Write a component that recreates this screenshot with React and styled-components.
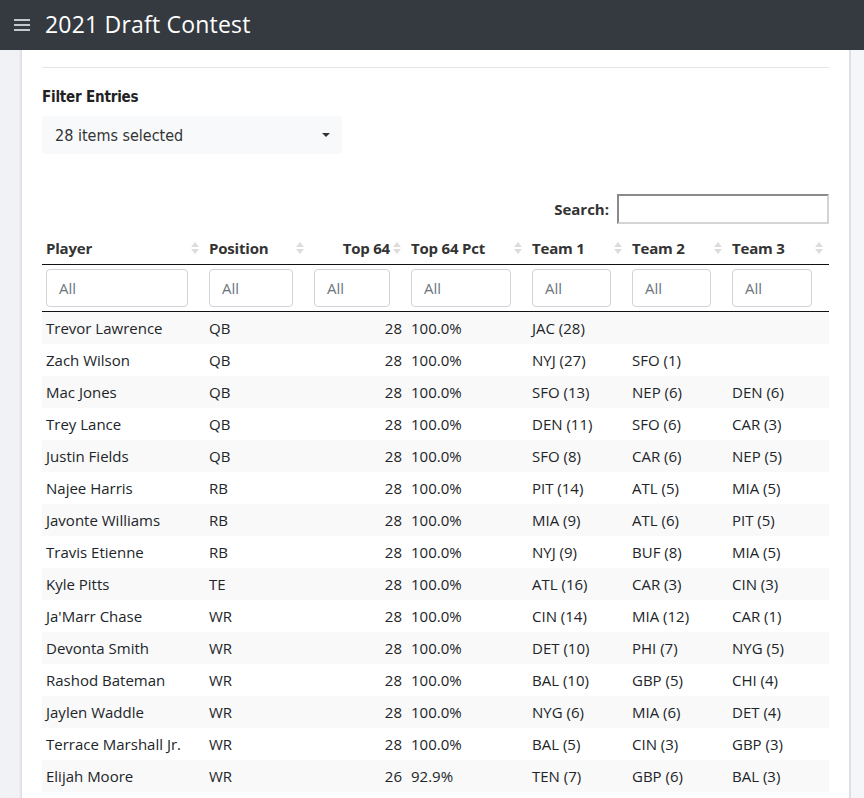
import * as React from 'react';
import styled, { createGlobalStyle } from 'styled-components';

const GlobalStyle = createGlobalStyle`
  html, body {
    margin: 0;
    padding: 0;
    background: #f4f6f9;
    font-family: 'Open Sans', 'Noto Sans', sans-serif;
    color: #212529;
  }
`;

const players = [
  ['Trevor Lawrence', 'QB', 28, '100.0%', 'JAC (28)', '', ''],
  ['Zach Wilson', 'QB', 28, '100.0%', 'NYJ (27)', 'SFO (1)', ''],
  ['Mac Jones', 'QB', 28, '100.0%', 'SFO (13)', 'NEP (6)', 'DEN (6)'],
  ['Trey Lance', 'QB', 28, '100.0%', 'DEN (11)', 'SFO (6)', 'CAR (3)'],
  ['Justin Fields', 'QB', 28, '100.0%', 'SFO (8)', 'CAR (6)', 'NEP (5)'],
  ['Najee Harris', 'RB', 28, '100.0%', 'PIT (14)', 'ATL (5)', 'MIA (5)'],
  ['Javonte Williams', 'RB', 28, '100.0%', 'MIA (9)', 'ATL (6)', 'PIT (5)'],
  ['Travis Etienne', 'RB', 28, '100.0%', 'NYJ (9)', 'BUF (8)', 'MIA (5)'],
  ['Kyle Pitts', 'TE', 28, '100.0%', 'ATL (16)', 'CAR (3)', 'CIN (3)'],
  ["Ja'Marr Chase", 'WR', 28, '100.0%', 'CIN (14)', 'MIA (12)', 'CAR (1)'],
  ['Devonta Smith', 'WR', 28, '100.0%', 'DET (10)', 'PHI (7)', 'NYG (5)'],
  ['Rashod Bateman', 'WR', 28, '100.0%', 'BAL (10)', 'GBP (5)', 'CHI (4)'],
  ['Jaylen Waddle', 'WR', 28, '100.0%', 'NYG (6)', 'MIA (6)', 'DET (4)'],
  ['Terrace Marshall Jr.', 'WR', 28, '100.0%', 'BAL (5)', 'CIN (3)', 'GBP (3)'],
  ['Elijah Moore', 'WR', 26, '92.9%', 'TEN (7)', 'GBP (6)', 'BAL (3)'],
];

const columns = [
  { label: 'Player', width: 163, input: 142, align: 'left' },
  { label: 'Position', width: 105, input: 84, align: 'left' },
  { label: 'Top 64', width: 97, input: 76, align: 'right' },
  { label: 'Top 64 Pct', width: 121, input: 100, align: 'left' },
  { label: 'Team 1', width: 100, input: 79, align: 'left' },
  { label: 'Team 2', width: 100, input: 79, align: 'left' },
  { label: 'Team 3', width: 101, input: 80, align: 'left' },
];

const Header = styled.header`
  height: 50px;
  background: #343a40;
  display: flex;
  align-items: center;
  padding-left: 14px;
  gap: 15px;
`;

const Burger = styled.div`
  width: 16px;
  display: flex;
  flex-direction: column;
  gap: 3px;
  span {
    height: 2px;
    background: #c2c7d0;
  }
`;

const Title = styled.h1`
  margin: 0 0 2px 0;
  font-size: 23px;
  font-weight: 400;
  color: #ffffff;
  letter-spacing: 0.2px;
`;

const Body = styled.div`
  display: flex;
  min-height: 748px;
`;

const Side = styled.div`
  width: 22px;
  flex-shrink: 0;
  background: #f1f2f6;
  box-shadow: inset -3px 0 3px -2px rgba(0, 0, 0, 0.12);
`;

const Filler = styled.div`
  flex: 1;
  background: #f4f6f9;
`;

const Card = styled.main`
  box-sizing: border-box;
  width: 829px;
  background: #ffffff;
  padding: 17px 20px 0 20px;
  border-right: 2px solid #dee0e4;
`;

const Rule = styled.hr`
  margin: 0;
  border: none;
  border-top: 1px solid #e5e5e5;
`;

const FilterLabel = styled.div`
  margin-top: 20px;
  font-family: 'DejaVu Sans Condensed', 'DejaVu Sans', sans-serif;
  font-weight: 700;
  font-size: 15px;
  color: #222;
  letter-spacing: -0.2px;
`;

const Select = styled.div`
  margin-top: 10px;
  width: 300px;
  height: 38px;
  box-sizing: border-box;
  background: #f8f9fa;
  border-radius: 3px;
  display: flex;
  align-items: center;
  justify-content: space-between;
  padding: 0 12px 0 13px;
  font-family: 'DejaVu Sans Condensed', 'DejaVu Sans', sans-serif;
  font-size: 16px;
  color: #333;
`;

const Caret = styled.span`
  width: 0;
  height: 0;
  border-left: 4px solid transparent;
  border-right: 4px solid transparent;
  border-top: 4px solid #333;
`;

const SearchBar = styled.div`
  margin-top: 40px;
  display: flex;
  justify-content: flex-end;
  align-items: center;
  gap: 8px;
  font-weight: 700;
  font-size: 15px;
  color: #333;
`;

const SearchInput = styled.div`
  width: 212px;
  height: 30px;
  box-sizing: border-box;
  border: 2px solid #d4d4d4;
  border-top-color: #8a8a8a;
  border-left-color: #8a8a8a;
`;

const Table = styled.table`
  margin-top: 8px;
  width: 787px;
  border-collapse: collapse;
  table-layout: fixed;
  font-size: 15px;
`;

const HeadCell = styled.th`
  position: relative;
  height: 32px;
  padding: 0 ${(p) => (p.$align === 'right' ? 17 : 4)}px 0 4px;
  text-align: ${(p) => p.$align};
  font-weight: 700;
  color: #333;
  border-bottom: 1px solid #111;
  letter-spacing: -0.2px;
`;

const SortIcon = styled.span`
  position: absolute;
  right: 6px;
  top: 10px;
  display: flex;
  flex-direction: column;
  gap: 2px;
  &::before,
  &::after {
    content: '';
    width: 0;
    height: 0;
    border-left: 4px solid transparent;
    border-right: 4px solid transparent;
  }
  &::before {
    border-bottom: 5px solid #dcdcdc;
  }
  &::after {
    border-top: 5px solid #dcdcdc;
  }
`;

const FilterCell = styled.td`
  height: 46px;
  padding: 0 4px;
  border-bottom: 1px solid #111;
`;

const FilterInput = styled.div`
  width: ${(p) => p.$w}px;
  height: 38px;
  box-sizing: border-box;
  border: 1px solid #ced4da;
  border-radius: 4px;
  display: flex;
  align-items: center;
  padding-left: 12px;
  color: #6c757d;
  font-size: 15px;
`;

const Row = styled.tr`
  background: ${(p) => (p.$odd ? '#f9f9f9' : '#ffffff')};
`;

const Cell = styled.td`
  height: 32px;
  padding: 0 ${(p) => (p.$align === 'right' ? 5 : 4)}px 0 4px;
  text-align: ${(p) => p.$align};
  white-space: nowrap;
  color: #212529;
`;

const App = () => {
  return (
    <>
      <GlobalStyle />
      <Header>
        <Burger>
          <span />
          <span />
          <span />
        </Burger>
        <Title>2021 Draft Contest</Title>
      </Header>
      <Body>
        <Side />
        <Card>
          <Rule />
          <FilterLabel>Filter Entries</FilterLabel>
          <Select>
            28 items selected
            <Caret />
          </Select>
          <SearchBar>
            Search:
            <SearchInput />
          </SearchBar>
          <Table>
            <colgroup>
              {columns.map((c) => (
                <col key={c.label} style={{ width: c.width }} />
              ))}
            </colgroup>
            <thead>
              <tr>
                {columns.map((c) => (
                  <HeadCell key={c.label} $align={c.align}>
                    {c.label}
                    <SortIcon />
                  </HeadCell>
                ))}
              </tr>
              <tr>
                {columns.map((c) => (
                  <FilterCell key={c.label}>
                    <FilterInput $w={c.input}>All</FilterInput>
                  </FilterCell>
                ))}
              </tr>
            </thead>
            <tbody>
              {players.map((row, idx) => (
                <Row key={row[0]} $odd={idx % 2 === 0}>
                  {row.map((v, i) => (
                    <Cell key={i} $align={columns[i].align}>
                      {v}
                    </Cell>
                  ))}
                </Row>
              ))}
            </tbody>
          </Table>
        </Card>
        <Filler />
      </Body>
    </>
  );
};

export default App;
